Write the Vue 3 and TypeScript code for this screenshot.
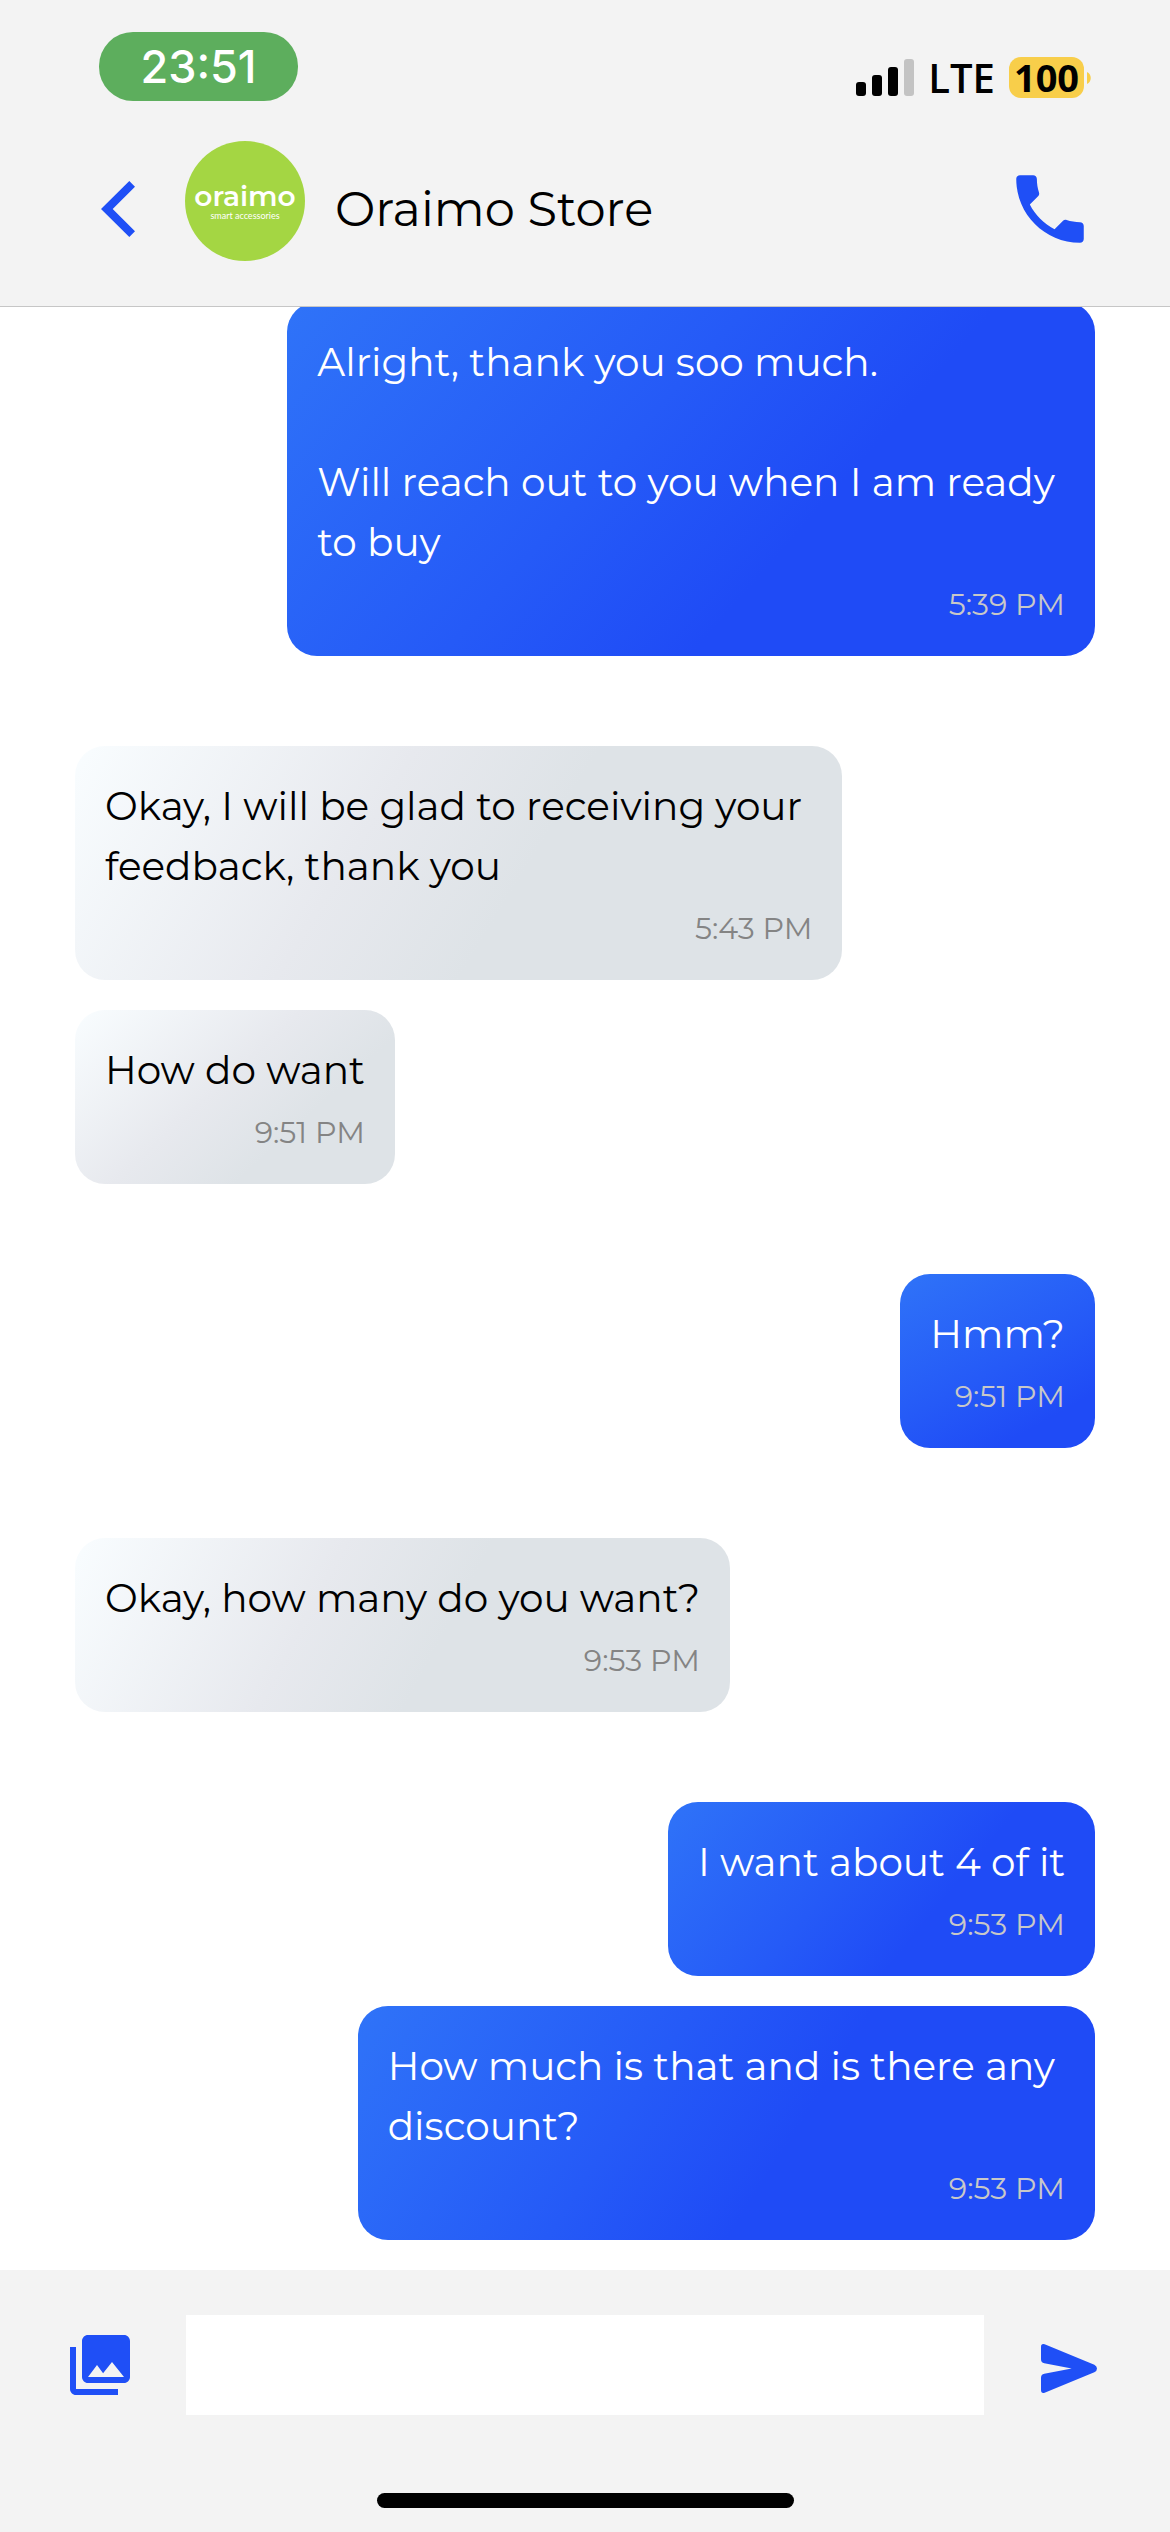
<script setup lang="ts">
import { ref } from 'vue'

interface Message {
  id: number
  mine: boolean
  text: string
  time: string
}

const messages: Message[] = [
  {
    id: 1,
    mine: true,
    text: 'Alright, thank you soo much.\n\nWill reach out to you when I am ready \nto buy',
    time: '5:39 PM',
  },
  { id: 2, mine: false, text: 'Okay, I will be glad to receiving your \nfeedback, thank you', time: '5:43 PM' },
  { id: 3, mine: false, text: 'How do want', time: '9:51 PM' },
  { id: 4, mine: true, text: 'Hmm?', time: '9:51 PM' },
  { id: 5, mine: false, text: 'Okay, how many do you want?', time: '9:53 PM' },
  { id: 6, mine: true, text: 'I want about 4 of it', time: '9:53 PM' },
  { id: 7, mine: true, text: 'How much is that and is there any \ndiscount?', time: '9:53 PM' },
]

const draft = ref('')

function startsGroup(index: number): boolean {
  return index > 0 && messages[index].mine !== messages[index - 1].mine
}
</script>

<template>
  <div class="screen">
    <header class="header">
      <div class="status">
        <span class="clock">23:51</span>
        <div class="indicators">
          <svg class="signal" viewBox="0 0 58 37" aria-hidden="true">
            <rect x="0" y="23" width="10" height="14" rx="3" />
            <rect x="16" y="16" width="10" height="21" rx="3" />
            <rect x="32" y="8" width="10" height="29" rx="3" />
            <rect class="weak" x="48" y="0" width="10" height="37" rx="3" />
          </svg>
          <span class="network">LTE</span>
          <span class="battery">100</span>
          <svg class="nub" viewBox="0 0 4 12" aria-hidden="true">
            <path d="M0 0C5 2 5 10 0 12Z" />
          </svg>
        </div>
      </div>

      <nav class="nav">
        <button class="icon-button back" type="button" aria-label="Back">
          <svg viewBox="0 0 34 56" aria-hidden="true">
            <path d="M28.3 0 34 5.7 11.7 28 34 50.3 28.3 56 0 28Z" />
          </svg>
        </button>
        <div class="avatar">
          <span class="brand">oraimo</span>
          <span class="tagline">smart accessories</span>
        </div>
        <h1 class="title">Oraimo Store</h1>
        <button class="icon-button call" type="button" aria-label="Call">
          <svg viewBox="0 0 24 24" aria-hidden="true">
            <path
              d="M6.62 10.79c1.44 2.83 3.76 5.14 6.59 6.59l2.2-2.2c.27-.27.67-.36 1.02-.24 1.12.37 2.33.57 3.57.57.55 0 1 .45 1 1V20c0 .55-.45 1-1 1-9.39 0-17-7.61-17-17 0-.55.45-1 1-1h3.5c.55 0 1 .45 1 1 0 1.25.2 2.45.57 3.57.11.35.03.74-.25 1.02l-2.2 2.2z"
            />
          </svg>
        </button>
      </nav>
    </header>

    <main class="thread">
      <article
        v-for="(message, index) in messages"
        :key="message.id"
        class="bubble"
        :class="{ mine: message.mine, 'group-start': startsGroup(index) }"
      >
        <span class="fill" aria-hidden="true"></span>
        <p class="text">{{ message.text }}</p>
        <time class="time">{{ message.time }}</time>
      </article>
    </main>

    <footer class="footer">
      <form class="composer" @submit.prevent>
        <button class="icon-button photos" type="button" aria-label="Attach a photo">
          <svg viewBox="0 0 24 24" aria-hidden="true">
            <path
              d="M22 16V4c0-1.1-.9-2-2-2H8c-1.1 0-2 .9-2 2v12c0 1.1.9 2 2 2h12c1.1 0 2-.9 2-2zm-11-4l2.03 2.71L16 11l4 5H8l3-4zM2 6v14c0 1.1.9 2 2 2h14v-2H4V6H2z"
            />
          </svg>
        </button>
        <input v-model="draft" class="field" type="text" aria-label="Message" />
        <button class="icon-button send" type="submit" aria-label="Send">
          <svg viewBox="0 -18 168 165" aria-hidden="true">
            <path
              d="M0 9Q0-2 11 1L160 62Q168 66 168 73.500Q168 81 160 85L11 146Q0 149 0 138V101Q0 91 10 89L92 73.500 10 58Q0 56 0 46Z"
            />
          </svg>
        </button>
      </form>
      <div class="home-indicator"></div>
    </footer>
  </div>
</template>

<style>
body {
  margin: 0;
  background: #fff;
}
</style>

<style scoped>
.screen {
  display: flex;
  flex-direction: column;
  height: 100vh;
  overflow: hidden;
  background: #fff;
  color: #000;
  font-family: Montserrat, Inter, sans-serif;
}

.header {
  flex: none;
  background: #f3f3f3;
  border-bottom: 1px solid #c6c6c6;
  padding-bottom: 30px;
}

.status {
  display: flex;
  justify-content: space-between;
  align-items: center;
  height: 91px;
  padding: 32px 79px 18px 99px;
}

.clock {
  align-self: flex-start;
  width: 199px;
  border-radius: 34px;
  background: #5dae5d;
  color: #fff;
  font-family: Inter, sans-serif;
  font-size: 45px;
  font-weight: 500;
  line-height: 69px;
  text-align: center;
}

.indicators {
  display: flex;
  align-items: center;
  font-family: 'Open Sans', sans-serif;
}

.signal {
  width: 58px;
  height: 37px;
}

.signal .weak {
  fill: #c3c3c3;
}

.network {
  width: 95px;
  font-size: 40px;
  font-weight: 600;
  line-height: 41px;
  text-align: center;
}

.battery {
  width: 75px;
  border-radius: 12px;
  background: #f8ce4a;
  font-size: 38px;
  font-weight: 700;
  line-height: 41px;
  text-align: center;
}

.nub {
  width: 4px;
  height: 12px;
  margin-left: 3px;
  fill: #f8ce4a;
}

.nav {
  display: flex;
  align-items: center;
  height: 135px;
  padding: 0 75px 0 101px;
}

.icon-button {
  flex: none;
  display: block;
  padding: 0;
  border: 0;
  background: none;
  cursor: pointer;
}

.icon-button svg {
  display: block;
  width: 100%;
  fill: #1f4ff6;
}

.back {
  width: 34px;
}

.avatar {
  align-self: flex-start;
  flex: none;
  display: flex;
  flex-direction: column;
  align-items: center;
  justify-content: center;
  width: 120px;
  height: 120px;
  margin: 0 30px 0 50px;
  border-radius: 50%;
  background: #a4d643;
  color: #fff;
}

.brand {
  font-size: 28px;
  font-weight: 600;
  line-height: 30px;
}

.tagline {
  font-family: Lato, sans-serif;
  font-size: 9px;
  line-height: 10px;
}

.title {
  flex: 1;
  margin: 0;
  font-size: 48px;
  font-weight: 400;
  line-height: 60px;
}

.call {
  width: 90px;
}

.thread {
  flex: 1;
  min-height: 0;
  display: flex;
  flex-direction: column;
  justify-content: flex-end;
  align-items: flex-start;
  gap: 30px;
  padding: 0 75px 30px;
  overflow: hidden;
}

.bubble {
  position: relative;
  z-index: 0;
  flex: none;
  display: flex;
  flex-direction: column;
  box-sizing: border-box;
  max-width: 80%;
  padding: 30px;
  border-radius: 30px;
  overflow: hidden;
  --from: #f9fdff;
  --middle: #e7e9ee;
  --to: #dee3e7;
}

.bubble.mine {
  align-self: flex-end;
  color: #fff;
  --from: #2f73f8;
  --middle: #255af7;
  --to: #1f4bf6;
}

.bubble.group-start {
  margin-top: 60px;
}

/* The gradient runs from the top left corner to the middle of the bottom edge. */
.fill {
  position: absolute;
  inset: 0;
  z-index: -1;
  container-type: size;
}

.fill::before {
  content: '';
  display: block;
  height: 100%;
  background: linear-gradient(
    atan2(50cqw, -100cqh),
    var(--from) 0,
    var(--middle) calc(hypot(50cqw, 100cqh) * 0.65),
    var(--to) hypot(50cqw, 100cqh)
  );
}

.text {
  margin: 0;
  font-size: 39px;
  font-weight: 400;
  line-height: 60px;
  white-space: break-spaces;
}

.time {
  align-self: flex-end;
  margin-top: 12px;
  color: #848484;
  font-size: 30px;
  font-weight: 400;
  line-height: 42px;
}

.mine .time {
  color: #c8c8c8;
}

.footer {
  flex: none;
  display: flex;
  flex-direction: column;
  align-items: center;
  gap: 78px;
  padding: 45px 0 24px;
  background: #f3f3f3;
}

.composer {
  display: flex;
  align-items: center;
  box-sizing: border-box;
  width: 100%;
  padding: 0 73px 0 64px;
}

.photos {
  width: 72px;
}

.field {
  flex: 1;
  min-width: 0;
  height: 100px;
  margin: 0 57px 0 50px;
  padding: 0 30px;
  box-sizing: border-box;
  border: 0;
  border-radius: 0;
  background: #fff;
  font: inherit;
  font-size: 39px;
}

.send {
  width: 56px;
}

.home-indicator {
  width: 417px;
  height: 15px;
  border-radius: 8px;
  background: #000;
}
</style>
